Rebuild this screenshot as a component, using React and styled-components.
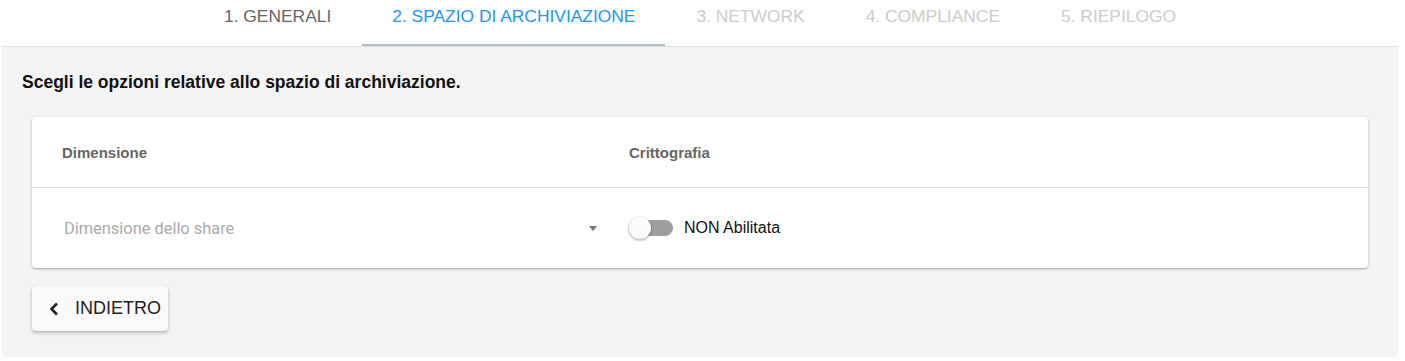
import React from "react";
import styled, { createGlobalStyle } from "styled-components";

const Global = createGlobalStyle`
  html, body { margin: 0; padding: 0; background: #fff; }
  body { font-family: "Liberation Sans", Arial, sans-serif; }
  * { box-sizing: border-box; }
`;

const Page = styled.div`
  margin: 0 7px 0 2px;
  display: flex;
  flex-direction: column;
`;

const TabBar = styled.nav`
  display: flex;
  justify-content: center;
  gap: 1px;
  height: 47px;
  border-bottom: 1px solid #e0e0e0;
`;

const Tab = styled.div`
  padding: 6px 30px 0;
  height: 46px;
  font-family: "Liberation Sans", Arial, sans-serif;
  font-size: 17.4px;
  line-height: 20px;
  text-transform: uppercase;
  white-space: nowrap;
  color: ${(p) => (p.$state === "active" ? "#2196f3" : p.$state === "done" ? "#666" : "#ccc")};
  border-bottom: 2px solid ${(p) => (p.$state === "active" ? "#b0bec5" : "transparent")};
`;

const Panel = styled.main`
  background: #f4f4f4;
  border-radius: 0 0 4px 4px;
  padding: 25px 30px 25px 20px;
  height: 310px;
  display: flex;
  flex-direction: column;
`;

const Intro = styled.h2`
  margin: 0 0 25px;
  font-family: "Liberation Sans", Arial, sans-serif;
  font-weight: bold;
  font-size: 17.5px;
  line-height: 20px;
  color: #111;
`;

const Card = styled.section`
  margin-left: 10px;
  background: #fff;
  border-radius: 4px;
  box-shadow: 0 1px 3px rgba(0, 0, 0, 0.25), 0 1px 1px rgba(0, 0, 0, 0.1);
`;

const Row = styled.div`
  display: grid;
  grid-template-columns: 567px 1fr;
  align-items: center;
  padding: 0 30px;
  height: ${(p) => p.$h}px;
  border-bottom: ${(p) => (p.$divider ? "1px solid #e0e0e0" : "none")};
`;

const ColLabel = styled.div`
  font-family: "Liberation Sans", Arial, sans-serif;
  font-weight: bold;
  font-size: 15px;
  color: #666;
`;

const Select = styled.div`
  display: flex;
  align-items: center;
  justify-content: space-between;
  width: 533px;
  margin-left: 2px;
  font-family: Roboto, sans-serif;
  font-size: 16.4px;
  color: #aaa;
`;

const Caret = styled.span`
  width: 0;
  height: 0;
  border-left: 4.5px solid transparent;
  border-right: 4.5px solid transparent;
  border-top: 5px solid #777;
`;

const SwitchWrap = styled.label`
  display: flex;
  align-items: center;
  gap: 11px;
  font-family: "Liberation Sans", Arial, sans-serif;
  font-size: 16px;
  color: #111;
`;

const Track = styled.span`
  position: relative;
  width: 44px;
  height: 22px;
  display: inline-block;
`;

const TrackBar = styled.span`
  position: absolute;
  left: 8px;
  right: 0;
  top: 3px;
  height: 16px;
  border-radius: 8px;
  background: #9e9e9e;
`;

const Thumb = styled.span`
  position: absolute;
  left: 0;
  top: 0;
  width: 22px;
  height: 22px;
  border-radius: 50%;
  background: #fafafa;
  box-shadow: 0 1px 3px rgba(0, 0, 0, 0.4);
`;

const BackButton = styled.button`
  margin: 18px 0 0 10px;
  align-self: flex-start;
  display: flex;
  align-items: center;
  gap: 16px;
  height: 45px;
  padding: 0 7px 0 17px;
  border: none;
  border-radius: 4px;
  background: #fafafa;
  box-shadow: 0 2px 4px rgba(0, 0, 0, 0.2), 0 1px 2px rgba(0, 0, 0, 0.12);
  font-family: "Liberation Sans", Arial, sans-serif;
  font-size: 18px;
  color: #222;
  cursor: pointer;
`;

const tabs = [
  ["1. Generali", "done"],
  ["2. Spazio di archiviazione", "active"],
  ["3. Network", "todo"],
  ["4. Compliance", "todo"],
  ["5. Riepilogo", "todo"],
];

export default function App() {
  return (
    <>
      <Global />
      <Page>
        <TabBar>
          {tabs.map(([t, s]) => (
            <Tab key={t} $state={s}>{t}</Tab>
          ))}
        </TabBar>
        <Panel>
          <Intro>Scegli le opzioni relative allo spazio di archiviazione.</Intro>
          <Card>
            <Row $h={71} $divider>
              <ColLabel>Dimensione</ColLabel>
              <ColLabel>Crittografia</ColLabel>
            </Row>
            <Row $h={80}>
              <Select>
                <span>Dimensione dello share</span>
                <Caret />
              </Select>
              <SwitchWrap>
                <Track>
                  <TrackBar />
                  <Thumb />
                </Track>
                NON Abilitata
              </SwitchWrap>
            </Row>
          </Card>
          <BackButton>
            <svg width="10" height="14" viewBox="0 0 10 14">
              <path d="M8 1.5 L2.5 7 L8 12.5" fill="none" stroke="#222" strokeWidth="2.6" />
            </svg>
            INDIETRO
          </BackButton>
        </Panel>
      </Page>
    </>
  );
}
